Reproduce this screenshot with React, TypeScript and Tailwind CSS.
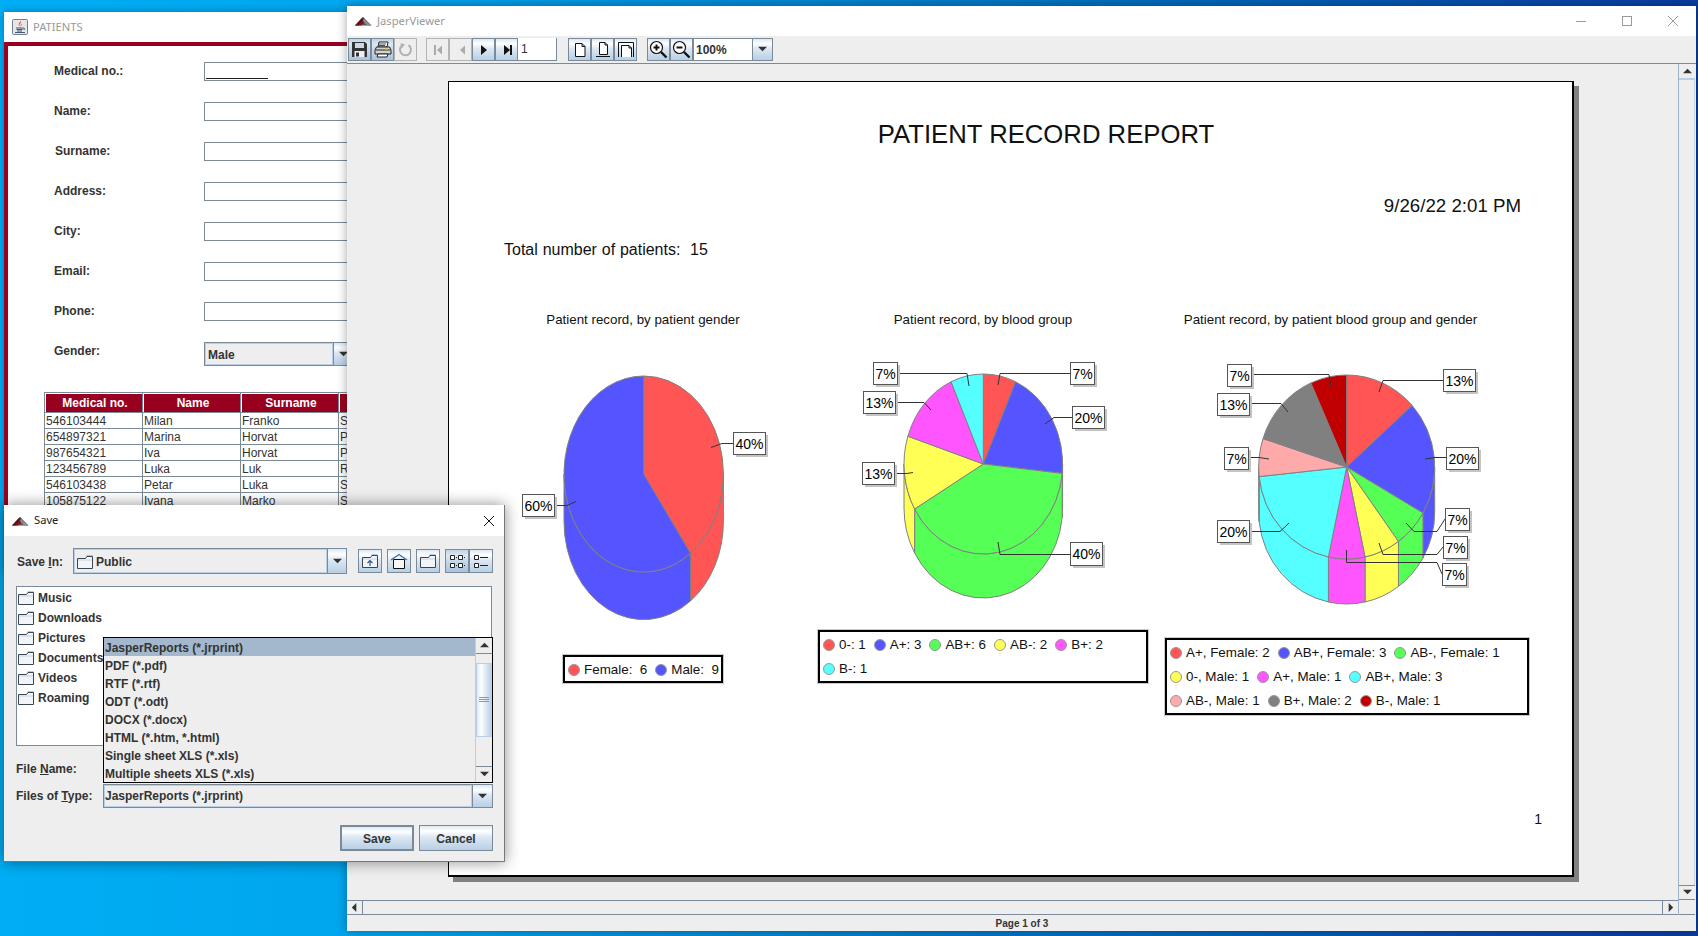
import React from "react";

const C = { r: "#FF5555", b: "#5555FF", g: "#55FF55", y: "#FFFF55", m: "#FF55FF", c: "#55FFFF", p: "#FFAAAA", k: "#808080", d: "#C00000" };

type Call = { box: [number, number, number, number]; t: string; line: number[][] };
type Pie = { cx: number; cy: number; rx: number; ry: number; depth: number; slices: [number, string][]; calls: Call[]; view: [number, number, number, number] };

function PieChart({ p }: { p: Pie }) {
  const total = p.slices.reduce((s, x) => s + x[0], 0);
  const pt = (a: number, dy = 0) => {
    const r = (a * Math.PI) / 180;
    return [(p.cx + p.rx * Math.sin(r)).toFixed(2), (p.cy - p.ry * Math.cos(r) + dy).toFixed(2)].join(" ");
  };
  let acc = 0;
  const parts = p.slices.map(([v, col]) => {
    const a0 = acc;
    const a1 = acc + (v / total) * 360;
    acc = a1;
    return { a0, a1, col };
  });
  return (
    <svg width={p.view[2]} height={p.view[3]} viewBox={p.view.join(" ")} className="block shrink-0">
      {parts.map((s, i) => {
        const a = Math.max(s.a0, 90);
        const b = Math.min(s.a1, 270);
        if (b <= a) return null;
        return (
          <path
            key={i}
            d={`M${pt(a)} A${p.rx} ${p.ry} 0 0 1 ${pt(b)} L${pt(b, p.depth)} A${p.rx} ${p.ry} 0 0 0 ${pt(a, p.depth)} Z`}
            fill={s.col}
            stroke="#808080"
            strokeWidth="1"
          />
        );
      })}
      {parts.map((s, i) => (
        <path
          key={i}
          d={`M${p.cx} ${p.cy} L${pt(s.a0)} A${p.rx} ${p.ry} 0 ${s.a1 - s.a0 > 180 ? 1 : 0} 1 ${pt(s.a1)} Z`}
          fill={s.col}
          stroke="#808080"
          strokeWidth="1"
        />
      ))}
      {p.calls.map((c, i) => {
        const [x0, y0, x1, y1] = c.box;
        return (
          <g key={i}>
            <polyline points={c.line.map((q) => q.join(",")).join(" ")} fill="none" stroke="#333333" strokeWidth="1" />
            <rect x={x0 + 3} y={y0 + 3} width={x1 - x0} height={y1 - y0} fill="#c4c4c4" />
            <rect x={x0 + 0.5} y={y0 + 0.5} width={x1 - x0} height={y1 - y0} fill="#ffffff" stroke="#555555" strokeWidth="1" />
            <text x={(x0 + x1) / 2 + 0.5} y={(y0 + y1) / 2 + 5.5} textAnchor="middle" fontSize="14" fill="#000" fontFamily="'Liberation Sans',sans-serif">
              {c.t}
            </text>
          </g>
        );
      })}
    </svg>
  );
}

const pie1: Pie = {
  cx: 643.7, cy: 474, rx: 79.7, ry: 98, depth: 47.6, view: [518, 340, 250, 300],
  slices: [[6, C.r], [9, C.b]],
  calls: [
    { box: [733, 432, 765, 454], t: "40%", line: [[733, 443.5], [722, 443.5], [711, 447.5]] },
    { box: [522, 494, 554, 516], t: "60%", line: [[554, 505.5], [567, 505.5], [576, 501.5]] },
  ],
};
const pie2: Pie = {
  cx: 983.3, cy: 464, rx: 79.3, ry: 90, depth: 44, view: [813, 340, 340, 270],
  slices: [[1, C.r], [3, C.b], [6, C.g], [2, C.y], [2, C.m], [1, C.c]],
  calls: [
    { box: [1070, 362, 1094, 384], t: "7%", line: [[1070, 373.5], [1000, 373.5], [998, 385]] },
    { box: [1072, 406, 1104, 428], t: "20%", line: [[1072, 417.5], [1054, 417.5], [1045, 424]] },
    { box: [1070, 542, 1102, 565], t: "40%", line: [[1070, 554.5], [1000, 554.5], [998, 542]] },
    { box: [862, 462, 894, 484], t: "13%", line: [[894, 473.5], [907, 473.5], [913, 472.5]] },
    { box: [863, 391, 895, 413], t: "13%", line: [[895, 402.5], [924, 402.5], [931, 410]] },
    { box: [873, 362, 897, 384], t: "7%", line: [[897, 373.5], [967, 373.5], [969, 386]] },
  ],
};
const pie3: Pie = {
  cx: 1346.7, cy: 467, rx: 88, ry: 92, depth: 45, view: [1153, 340, 388, 280],
  slices: [[2, C.r], [3, C.b], [1, C.g], [1, C.y], [1, C.m], [3, C.c], [1, C.p], [2, C.k], [1, C.d]],
  calls: [
    { box: [1443, 369, 1475, 391], t: "13%", line: [[1443, 380.5], [1383, 380.5], [1379, 392]] },
    { box: [1446, 447, 1478, 469], t: "20%", line: [[1446, 457.5], [1435, 457.5], [1425, 459]] },
    { box: [1445, 508, 1469, 530], t: "7%", line: [[1445, 519], [1437, 531.5], [1414, 531.5], [1406, 523]] },
    { box: [1443, 536, 1467, 558], t: "7%", line: [[1443, 547], [1437, 554.5], [1383, 554.5], [1379, 543]] },
    { box: [1442, 563, 1466, 585], t: "7%", line: [[1442, 574], [1437, 562.5], [1346.5, 562.5], [1346.5, 550]] },
    { box: [1217, 520, 1249, 542], t: "20%", line: [[1249, 531.5], [1280, 531.5], [1289, 523]] },
    { box: [1224, 447, 1248, 469], t: "7%", line: [[1248, 457.5], [1259, 457.5], [1269, 459]] },
    { box: [1217, 393, 1249, 415], t: "13%", line: [[1249, 403.5], [1281, 403.5], [1288, 412]] },
    { box: [1227, 364, 1251, 386], t: "7%", line: [[1251, 374.5], [1329, 374.5], [1331, 387]] },
  ],
};

function Legend({ rows, width }: { rows: [string, string][][]; width: string }) {
  return (
    <div className={`border-2 border-black shadow-[0_0_0_1px_#c8c8c8] ${width} pl-[3px] text-[13.4px] text-[#111]`}>
      {rows.map((r, i) => (
        <div key={i} className="flex items-center gap-[8px] h-[24.3px]">
          {r.map(([col, t], j) => (
            <div key={j} className="flex items-center gap-[4px] pt-[1px]">
              <span className="w-[12px] h-[12px] rounded-full border border-[#999]" style={{ background: col }} />
              <span className="whitespace-pre">{t}</span>
            </div>
          ))}
        </div>
      ))}
    </div>
  );
}

function Logo() {
  return (
    <svg width="17" height="10" viewBox="0 0 17 10" className="shrink-0">
      <path d="M0 9.5 L8 1 L16.5 9.5 Z" fill="#555" />
      <path d="M0 9.5 L7 2 L11 5 L6 9.5 Z" fill="#8f0f14" />
      <path d="M7.5 1 L11 5 L16.5 9.5 L12 9.5 L8 5 Z" fill="#8d8d8d" />
      <path d="M0 9.5 L8 1 L9.5 2.5 L3 9.5 Z" fill="#1a1a1a" opacity=".55" />
    </svg>
  );
}

function JavaIcon() {
  return (
    <svg width="16" height="16" viewBox="0 0 16 16" className="shrink-0">
      <rect x=".5" y=".5" width="15" height="15" rx="1" fill="#e6e6ea" stroke="#6f7f90" />
      <path d="M8.5 2 C10 4 6.5 5 7.5 7.5 C6 6 6.5 4.5 8.5 2Z M10 4.5 C10 6 8.5 6.5 9 8 C8 7 8.5 5.5 10 4.5Z" fill="#d9531e" />
      <path d="M4 9 H11 M4.5 10.5 H10.5 M5 12 H10 M3 13.5 H13" stroke="#44586e" strokeWidth="1" fill="none" />
      <path d="M11 9 Q13.5 9 12 11" stroke="#44586e" fill="none" />
    </svg>
  );
}

function WinButtons() {
  return (
    <div className="flex ml-auto text-[#999]">
      <div className="w-[46px] flex justify-center items-center">
        <svg width="12" height="12" viewBox="0 0 12 12"><path d="M1 6.5H11" stroke="#999" /></svg>
      </div>
      <div className="w-[46px] flex justify-center items-center">
        <svg width="12" height="12" viewBox="0 0 12 12"><rect x="1.5" y="1.5" width="9" height="9" fill="none" stroke="#999" /></svg>
      </div>
      <div className="w-[46px] flex justify-center items-center">
        <svg width="12" height="12" viewBox="0 0 12 12"><path d="M1 1L11 11M11 1L1 11" stroke="#999" /></svg>
      </div>
    </div>
  );
}

function Tri({ dir = "down", size = 9, color = "#333" }: { dir?: "up" | "down" | "left" | "right"; size?: number; color?: string }) {
  const d = { down: "M0 2H10L5 7Z", up: "M0 7H10L5 2Z", left: "M7 0V10L2 5Z", right: "M3 0V10L8 5Z" }[dir];
  return (
    <svg width={size} height={size} viewBox="0 0 10 10" className="shrink-0"><path d={d} fill={color} /></svg>
  );
}

const grad = "bg-[linear-gradient(to_bottom,#dde8f3_0%,#ffffff_22%,#dde8f3_45%,#b8cfe5_100%)]";
const gradOn = "bg-[linear-gradient(to_bottom,#c3d3e3_0%,#dbe7f2_25%,#c8d9e9_50%,#a9c3dc_100%)]";

function TB({ children, on, off }: { children?: React.ReactNode; on?: boolean; off?: boolean }) {
  const cls = off
    ? "border-[#b4b4b4] bg-[#eeeeee]"
    : on
      ? `border-[#7a8a99] ${gradOn}`
      : `border-[#7a8a99] ${grad}`;
  return <div className={`w-[23px] h-[23px] border flex items-center justify-center shrink-0 ${cls}`}>{children}</div>;
}

function Folder({ kind = "plain" }: { kind?: string }) {
  return (
    <svg width="16" height="14" viewBox="0 0 16 14" className="shrink-0">
      <path d="M9.5 .5H15.5V3H9.5Z" fill="#6a8fc8" />
      <path d="M.5 3.5H8.5L10 1.5H15.5V13.5H.5Z" fill="#f2f4f8" stroke="#3a4652" />
      <path d="M1 4.5H15V5.5H1Z" fill="#c6d2e0" />
      {kind === "up" && <path d="M8 12V7M5.5 9L8 6.5L10.5 9" stroke="#2a5a9a" strokeWidth="1.2" fill="none" />}
    </svg>
  );
}

const formLabels = ["Medical no.:", "Name:", "Surname:", "Address:", "City:", "Email:", "Phone:"];
const people = [
  ["546103444", "Milan", "Franko", "S"],
  ["654897321", "Marina", "Horvat", "P"],
  ["987654321", "Iva", "Horvat", "P"],
  ["123456789", "Luka", "Luk", "R"],
  ["546103438", "Petar", "Luka", "S"],
  ["105875122", "Ivana", "Marko", "S"],
];

function PatientsWindow() {
  return (
    <div className="absolute left-[4px] top-[12px] w-[500px] h-[560px] flex flex-col bg-white font-['Liberation_Sans',sans-serif] shadow-[0_0_8px_rgba(0,0,0,0.3)]">
      <div className="h-[30px] flex items-center gap-[5px] pl-[8px] shrink-0">
        <JavaIcon />
        <span className="text-[11.2px] text-[#999] font-['Noto_Sans',sans-serif]">PATIENTS</span>
      </div>
      <div className="flex-1 border-4 border-[#990020] pt-[16px] text-[12px] text-[#333]">
        {formLabels.map((l, i) => (
          <div key={l} className="flex h-[19px] mb-[21px]">
            <div className={`w-[196px] leading-[18px] font-bold ${i === 2 ? "pl-[47px]" : "pl-[46px]"} shrink-0`}>{l}</div>
            <div className="flex-1 border border-[#7a8a99] border-r-0 bg-white flex items-end pl-[1px] pb-[1px]">
              {i === 0 && <div className="w-[62px] border-b border-[#222]" />}
            </div>
          </div>
        ))}
        <div className="flex h-[24px]">
          <div className="w-[196px] pl-[46px] leading-[18px] font-bold shrink-0">Gender:</div>
          <div className="w-[130px] border border-[#7a8a99] bg-[#eeeeee] shadow-[inset_0_0_0_1px_#b8cfe5] font-bold flex items-center pl-[3px] pt-[1px] shrink-0">Male</div>
          <div className={`flex-1 border border-l-0 border-[#7a8a99] flex items-center pl-[5px] ${grad}`}><Tri /></div>
        </div>
        <div className="ml-[36px] mt-[26px] border-t border-l border-[#7a8a99]">
          <div className="flex h-[20px] bg-[#990020] text-white font-bold">
            {["Medical no.", "Name", "Surname", ""].map((h, i) => (
              <div key={i} className={`${i === 3 ? "flex-1" : "w-[98px]"} text-center pl-[3px] leading-[20px] border-r border-b border-[#7a8a99] shadow-[inset_1px_1px_0_#fff]`}>{h}</div>
            ))}
          </div>
          {people.map((r) => (
            <div key={r[0]} className="flex h-[16px]">
              {r.map((c, i) => (
                <div key={i} className={`${i === 3 ? "flex-1" : "w-[98px]"} pl-[1px] leading-[17px] border-r border-b border-[#7a8a99]`}>{c}</div>
              ))}
            </div>
          ))}
        </div>
      </div>
    </div>
  );
}

function FloppyI() {
  return (
    <svg width="17" height="17" viewBox="0 0 17 17"><path d="M1 1H14L16 3V16H1Z" fill="#333" /><rect x="4" y="2" width="9" height="5" fill="#cfd8e2" /><rect x="3.5" y="10" width="10" height="6" fill="#eef" /><rect x="5" y="11.5" width="3" height="4" fill="#333" /></svg>
  );
}
function PrintI() {
  return (
    <svg width="18" height="17" viewBox="0 0 18 17">
      <path d="M5 1H14L13 6H4Z" fill="#fff" stroke="#222" />
      <path d="M2.5 6H15.5L17 9V13H1V9Z" fill="#d4d4d4" stroke="#222" />
      <path d="M2 9H16" stroke="#222" />
      <rect x="11" y="7" width="3" height="1.5" fill="#e8d020" />
      <path d="M4 13H14L13 16H3Z" fill="#fff" stroke="#222" />
      <path d="M5 3H12M5 4.5H11" stroke="#555" />
    </svg>
  );
}
function ReloadI() {
  return (
    <svg width="16" height="16" viewBox="0 0 16 16"><path d="M10.5 3.2A5.5 5.5 0 1 1 4 3.5" fill="none" stroke="#b0b0b0" strokeWidth="2" /><path d="M2.5 1L7 2.5L3.5 6.5Z" fill="#b0b0b0" /></svg>
  );
}
function Nav({ bar, dir, off }: { bar?: boolean; dir: "left" | "right"; off?: boolean }) {
  const col = off ? "#aaaaaa" : "#111111";
  const x = dir === "left" ? "M11 2.5V11.5L6 7Z" : "M4 2V12L10 7Z";
  return (
    <svg width="14" height="14" viewBox="0 0 14 14">
      <path d={x} fill={col} />
      {bar && <rect x={dir === "left" ? 3 : 10} y="2" width="2" height="10" fill={col} />}
    </svg>
  );
}
function PageI({ mode }: { mode: number }) {
  if (mode === 0)
    return <svg width="14" height="16" viewBox="0 0 14 16"><path d="M2.5 1.5H9L12 4.5V14.5H2.5Z M9 1.5V4.5H12" fill="#fff" stroke="#111" /></svg>;
  if (mode === 1)
    return <svg width="18" height="17" viewBox="0 0 18 17"><path d="M5.5 1.5H11L13.5 4V13.5H5.5Z M11 1.5V4H13.5" fill="#fff" stroke="#111" /><path d="M2 15.5H16" stroke="#111" /></svg>;
  return <svg width="18" height="17" viewBox="0 0 18 17"><path d="M1.5 16V1.5H16.5V16" fill="none" stroke="#111" /><path d="M4.5 16V4.5H12L14.5 7V16" fill="#fff" stroke="#111" /><path d="M12 4.5V7H14.5" fill="none" stroke="#111" /></svg>;
}
function ZoomI({ plus }: { plus?: boolean }) {
  return (
    <svg width="19" height="19" viewBox="0 0 19 19">
      <circle cx="7.5" cy="7.5" r="6" fill="#fff" stroke="#111" strokeWidth="1.2" />
      <path d="M12 12L17.5 17.5" stroke="#111" strokeWidth="2.4" />
      <path d="M4.5 7.5H10.5" stroke="#111" strokeWidth="2" />
      {plus && <path d="M7.5 4.5V10.5" stroke="#111" strokeWidth="2" />}
    </svg>
  );
}

function ReportPage() {
  return (
    <div className="w-[1126px] h-[796px] bg-white border-l border-t border-r-2 border-b-2 border-black shadow-[5px_5px_0_#808080] shrink-0 text-[#111] font-['Liberation_Sans',sans-serif]">
      <div className="mt-[38px] pl-[71px] h-[28px] leading-[28px] text-[25.7px] text-center">PATIENT RECORD REPORT</div>
      <div className="mt-[47px] pr-[51px] h-[22px] leading-[22px] text-[18.7px] text-right">9/26/22 2:01 PM</div>
      <div className="mt-[23px] pl-[55px] h-[20px] leading-[20px] text-[16px] whitespace-pre [word-spacing:0.4px]">Total number of patients:  15</div>
      <div className="mt-[52px] ml-[69px] flex items-start text-[13.33px]">
        <div className="w-[250px] flex flex-col items-center">
          <div className="h-[16px] leading-[16px]">Patient record, by patient gender</div>
          <div className="mt-[12px]"><PieChart p={pie1} /></div>
          <div className="mt-[15px]"><Legend width="w-[160px]" rows={[[[C.r, "Female:  6"], [C.b, "Male:  9"]]]} /></div>
        </div>
        <div className="ml-[45px] w-[340px] flex flex-col items-center">
          <div className="h-[16px] leading-[16px]">Patient record, by blood group</div>
          <div className="mt-[12px]"><PieChart p={pie2} /></div>
          <div className="mt-[20px]">
            <Legend width="w-[330px]" rows={[[[C.r, "0-: 1"], [C.b, "A+: 3"], [C.g, "AB+: 6"], [C.y, "AB-: 2"], [C.m, "B+: 2"]], [[C.c, "B-: 1"]]]} />
          </div>
        </div>
        <div className="w-[388px] flex flex-col items-center">
          <div className="h-[16px] leading-[16px] pr-[33px]">Patient record, by patient blood group and gender</div>
          <div className="mt-[12px]"><PieChart p={pie3} /></div>
          <div className="mt-[18px]">
            <Legend
              width="w-[364px]"
              rows={[
                [[C.r, "A+, Female: 2"], [C.b, "AB+, Female: 3"], [C.g, "AB-, Female: 1"]],
                [[C.y, "0-, Male: 1"], [C.m, "A+, Male: 1"], [C.c, "AB+, Male: 3"]],
                [[C.p, "AB-, Male: 1"], [C.k, "B+, Male: 2"], [C.d, "B-, Male: 1"]],
              ]}
            />
          </div>
        </div>
      </div>
      <div className="mt-[96px] pr-[30px] text-right text-[14px] leading-[16px]">1</div>
    </div>
  );
}

function JasperWindow() {
  return (
    <div className="absolute left-[347px] top-[6px] w-[1349px] h-[925px] bg-[#eeeeee] flex flex-col font-['Liberation_Sans',sans-serif] shadow-[0_0_10px_rgba(0,0,0,0.35)]">
      <div className="h-[30px] bg-white flex items-center pl-[8px] gap-[5px] shrink-0">
        <Logo />
        <span className="text-[11.2px] text-[#999] font-['Noto_Sans',sans-serif]">JasperViewer</span>
        <WinButtons />
      </div>
      <div className="h-[28px] flex items-start pl-[1px] pt-[2px] shrink-0 border-b border-[#7a8a99]">
        <TB on><FloppyI /></TB>
        <TB on><PrintI /></TB>
        <TB off><ReloadI /></TB>
        <div className="w-[9px]" />
        <TB off><Nav dir="left" bar off /></TB>
        <TB off><Nav dir="left" off /></TB>
        <TB><Nav dir="right" /></TB>
        <TB><Nav dir="right" bar /></TB>
        <div className="w-[39px] h-[23px] bg-white border-r border-b border-[#7a8a99] text-[12px] text-[#333] pl-[3px] leading-[23px]">1</div>
        <div className="w-[11px]" />
        <TB><PageI mode={0} /></TB>
        <TB><PageI mode={1} /></TB>
        <TB><PageI mode={2} /></TB>
        <div className="w-[10px]" />
        <TB><ZoomI plus /></TB>
        <TB><ZoomI /></TB>
        <div className="w-[60px] h-[23px] bg-white border border-[#7a8a99] text-[12px] font-bold text-[#333] pl-[2px] leading-[22px]">100%</div>
        <div className={`w-[20px] h-[23px] border border-l-0 border-[#7a8a99] flex items-center justify-center ${grad}`}><Tri /></div>
      </div>
      <div className="flex-1 flex min-h-0">
        <div className="flex-1 flex flex-col min-w-0">
          <div className="flex-1 flex justify-center pt-[17px] pr-[3px] overflow-hidden">
            <ReportPage />
          </div>
          <div className="h-[15px] border-t border-[#7a8a99] flex items-stretch shrink-0">
            <div className="w-[16px] border-r border-b border-[#7a8a99] flex items-center justify-center"><Tri dir="left" /></div>
            <div className="flex-1 border-b border-[#7a8a99]" />
            <div className="w-[16px] border-l border-b border-[#7a8a99] flex items-center justify-center"><Tri dir="right" /></div>
          </div>
        </div>
        <div className="w-[17px] border-l border-[#9eb2c6] flex flex-col shrink-0 mr-px">
          <div className="h-[16px] border-b-2 border-[#b8cfe5] flex items-center justify-center"><Tri dir="up" /></div>
          <div className="flex-1 border-r border-[#c8d6e4]" />
          <div className="h-[15px] border-t border-b border-[#7a8a99] flex items-center justify-center"><Tri /></div>
          <div className="h-[15px] border-b border-[#7a8a99]" />
        </div>
      </div>
      <div className="h-[16px] shrink-0 flex items-center justify-center pl-[1px] text-[10px] font-bold text-[#333]">Page 1 of 3</div>
    </div>
  );
}

function Grip() {
  return (
    <svg width="10" height="6" viewBox="0 0 10 6"><path d="M0 .5H10M0 2.5H10M0 4.5H10" stroke="#7a9ccc" /></svg>
  );
}

function U({ children }: { children: React.ReactNode }) {
  return <span className="underline underline-offset-1">{children}</span>;
}

const fileTypes = [
  "JasperReports (*.jrprint)",
  "PDF (*.pdf)",
  "RTF (*.rtf)",
  "ODT (*.odt)",
  "DOCX (*.docx)",
  "HTML (*.htm, *.html)",
  "Single sheet XLS (*.xls)",
  "Multiple sheets XLS (*.xls)",
];

function DBtn({ children, on }: { children: React.ReactNode; on?: boolean }) {
  return <div className={`w-[24px] h-[24px] border-[1.5px] border-[#7a8a99] flex items-center justify-center shrink-0 ${on ? gradOn : grad}`}>{children}</div>;
}

function SaveDialog() {
  return (
    <div className="absolute left-[4px] top-[505px] w-[501px] h-[357px] bg-[#eeeeee] flex flex-col text-[12px] text-[#333] font-bold font-['Liberation_Sans',sans-serif] shadow-[0_0_14px_rgba(0,0,0,0.45)] border-r border-b border-[#777]">
      <div className="h-[31px] bg-white flex items-center pl-[8px] gap-[5px] shrink-0 font-normal">
        <Logo />
        <span className="text-[11.2px] text-[#222] font-['Noto_Sans',sans-serif]">Save</span>
        <svg width="12" height="12" viewBox="0 0 12 12" className="ml-auto mr-[9px]"><path d="M1 1L11 11M11 1L1 11" stroke="#111" /></svg>
      </div>
      <div className="pl-[13px] pt-[12px] flex items-center h-[38px] shrink-0">
        <div className="w-[56px] pt-[1px]">Save <U>I</U>n:</div>
        <div className="w-[255px] h-[26px] border border-[#7a8a99] bg-[#eeeeee] shadow-[inset_0_0_0_1px_#b8cfe5] flex items-center gap-[3px] pl-[3px] pt-[1px]">
          <Folder /><span>Public</span>
        </div>
        <div className={`w-[19px] h-[26px] border border-l-0 border-[#7a8a99] flex items-center justify-center ${grad}`}><Tri /></div>
        <div className="w-[11px]" />
        <DBtn><Folder kind="up" /></DBtn>
        <div className="w-[5px]" />
        <DBtn>
          <svg width="18" height="17" viewBox="0 0 18 17"><path d="M1 7L9 1.5L17 7" fill="none" stroke="#3a6aaa" strokeWidth="1.2" /><path d="M3.5 6.5H14.5V15.5H3.5Z" fill="#f6f6f6" stroke="#111" /></svg>
        </DBtn>
        <div className="w-[5px]" />
        <DBtn><Folder /></DBtn>
        <div className="w-[5px]" />
        <DBtn on>
          <svg width="16" height="16" viewBox="0 0 16 16"><path d="M1.5 2.5H5.5V6.5H1.5ZM9.5 2.5H13.5V6.5H9.5ZM1.5 10.5H5.5V14.5H1.5ZM9.5 10.5H13.5V14.5H9.5Z" fill="#fff" stroke="#222" /><path d="M7 4.5H8M15 4.5H16M7 12.5H8M15 12.5H16" stroke="#222" /></svg>
        </DBtn>
        <DBtn>
          <svg width="16" height="16" viewBox="0 0 16 16"><path d="M1.5 2.5H5.5V6.5H1.5ZM1.5 10.5H5.5V14.5H1.5Z" fill="#fff" stroke="#222" /><path d="M7 4.5H15M7 12.5H15" stroke="#222" /></svg>
        </DBtn>
      </div>
      <div className="ml-[12px] mt-[12px] w-[476px] h-[160px] border border-[#7a8a99] bg-white shrink-0 pl-[1px] pt-[1px]">
        {["Music", "Downloads", "Pictures", "Documents", "Videos", "Roaming"].map((f) => (
          <div key={f} className="h-[20px] flex items-center gap-[4px]">
            <Folder /><span>{f}</span>
          </div>
        ))}
      </div>
      <div className="ml-[12px] mt-[11px] h-[24px] flex items-center shrink-0"><div>File <U>N</U>ame:</div></div>
      <div className="ml-[12px] mt-[3px] h-[24px] flex items-center shrink-0">
        <div className="w-[87px]">Files of <U>T</U>ype:</div>
        <div className="w-[370px] h-[24px] border border-[#7a8a99] bg-[#eeeeee] shadow-[inset_0_0_0_1px_#b8cfe5] flex items-center pl-[1px]">JasperReports (*.jrprint)</div>
        <div className={`w-[20px] h-[24px] border border-l-0 border-[#7a8a99] flex items-center justify-center ${grad}`}><Tri /></div>
      </div>
      <div className="mt-[17px] pr-[11px] flex justify-end gap-[5px] shrink-0">
        <div className={`w-[74px] h-[26px] border-2 border-[#7a8a99] flex items-center justify-center pt-[1px] ${grad}`}>Save</div>
        <div className={`w-[74px] h-[26px] border border-[#7a8a99] flex items-center justify-center pt-[1px] ${grad}`}>Cancel</div>
      </div>
      <div className="absolute left-[99px] top-[132px] w-[390px] h-[146px] border border-black bg-[#eeeeee] flex">
        <div className="flex-1">
          {fileTypes.map((t, i) => (
            <div key={t} className={`h-[18px] flex items-center pl-[1px] pt-[1px] ${i === 0 ? "bg-[#a3b8cc]" : ""}`}>{t}</div>
          ))}
        </div>
        <div className="w-[17px] border-l border-[#b8cfe5] flex flex-col">
          <div className="h-[16px] border-b border-[#7a8a99] flex items-center justify-center"><Tri dir="up" /></div>
          <div className="h-[9px]" />
          <div className="h-[74px] border border-[#b8cfe5] flex items-center justify-center bg-[linear-gradient(to_right,#dde8f3,#ffffff_30%,#b8cfe5)]"><Grip /></div>
          <div className="flex-1" />
          <div className="h-[16px] border-t border-[#7a8a99] flex items-center justify-center"><Tri /></div>
        </div>
      </div>
    </div>
  );
}

export default function App() {
  return (
    <div className="relative w-[1698px] h-[936px] overflow-hidden bg-[linear-gradient(to_right,#00aef5_0%,#00a4ec_25%,#0074c4_62%,#0a3ca4_100%)]">
      <PatientsWindow />
      <JasperWindow />
      <SaveDialog />
    </div>
  );
}
